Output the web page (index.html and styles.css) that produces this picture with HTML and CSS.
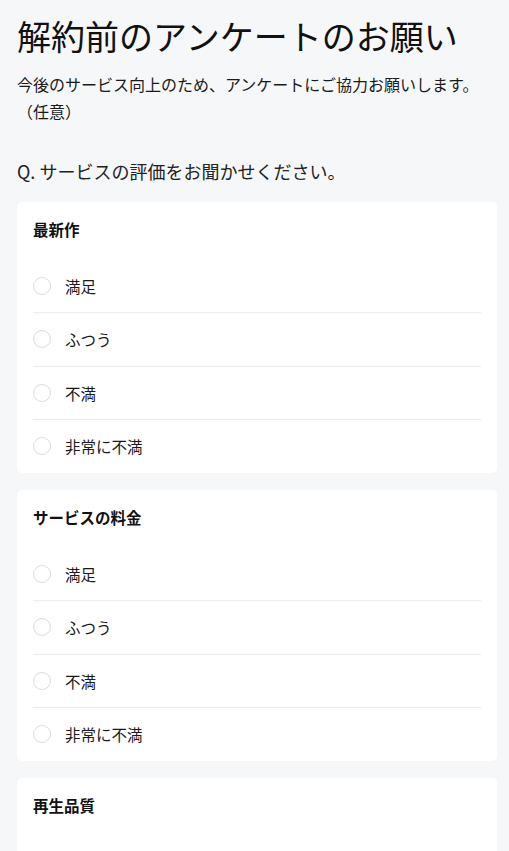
FILE: index.html
```html
<!DOCTYPE html>
<html lang="ja">
<head>
<meta charset="utf-8">
<title>解約前のアンケートのお願い</title>
<link rel="stylesheet" href="styles.css">
</head>
<body>
<main class="page">
  <h1 class="title">解約前のアンケートのお願い</h1>
  <p class="lead">今後のサービス向上のため、アンケートにご協力お願いします。（任意）</p>
  <p class="question">Q. サービスの評価をお聞かせください。</p>

  <section class="card">
    <h2 class="card-title">最新作</h2>
    <ul class="options">
      <li class="option"><span class="radio"></span><span class="label">満足</span></li>
      <li class="option"><span class="radio"></span><span class="label">ふつう</span></li>
      <li class="option"><span class="radio"></span><span class="label">不満</span></li>
      <li class="option"><span class="radio"></span><span class="label">非常に不満</span></li>
    </ul>
  </section>

  <section class="card">
    <h2 class="card-title">サービスの料金</h2>
    <ul class="options">
      <li class="option"><span class="radio"></span><span class="label">満足</span></li>
      <li class="option"><span class="radio"></span><span class="label">ふつう</span></li>
      <li class="option"><span class="radio"></span><span class="label">不満</span></li>
      <li class="option"><span class="radio"></span><span class="label">非常に不満</span></li>
    </ul>
  </section>

  <section class="card">
    <h2 class="card-title">再生品質</h2>
    <ul class="options">
      <li class="option"><span class="radio"></span><span class="label">満足</span></li>
      <li class="option"><span class="radio"></span><span class="label">ふつう</span></li>
      <li class="option"><span class="radio"></span><span class="label">不満</span></li>
      <li class="option"><span class="radio"></span><span class="label">非常に不満</span></li>
    </ul>
  </section>
</main>
</body>
</html>
```

FILE: styles.css
```css
html, body {
  margin: 0;
  padding: 0;
  background: #f6f7f9;
}
body {
  font-family: "Noto Sans CJK JP", "Noto Sans", sans-serif;
  color: #1a1a1a;
}
.page {
  padding: 12px 12px 40px 17px;
}
.title {
  margin: 0;
  font-size: 34px;
  font-weight: 400;
  line-height: 47.6px;
  color: #111;
  letter-spacing: 0;
}
.lead {
  margin: 11px 0 0;
  font-size: 16px;
  line-height: 27px;
  color: #1a1a1a;
}
.question {
  margin: 33px 0 0;
  font-size: 18px;
  line-height: 27px;
  color: #222;
}
.card {
  background: #fff;
  border-radius: 5px;
  margin-top: 17px;
  padding: 15px 16px 0;
}
.card-title {
  margin: 0 0 19px;
  font-size: 15.5px;
  font-weight: 700;
  line-height: 24px;
  color: #111;
}
.options {
  list-style: none;
  margin: 0;
  padding: 0;
}
.option {
  display: flex;
  align-items: center;
  gap: 14px;
  height: 52.5px;
  border-top: 1px solid #ececec;
  font-size: 15.5px;
  color: #1a1a1a;
}
.option:first-child {
  border-top: none;
}
.radio {
  flex: none;
  box-sizing: border-box;
  width: 18px;
  height: 18px;
  border: 1.5px solid #dcdcdc;
  border-radius: 50%;
  background: #fff;
}
.label {
  line-height: 24px;
}
```
